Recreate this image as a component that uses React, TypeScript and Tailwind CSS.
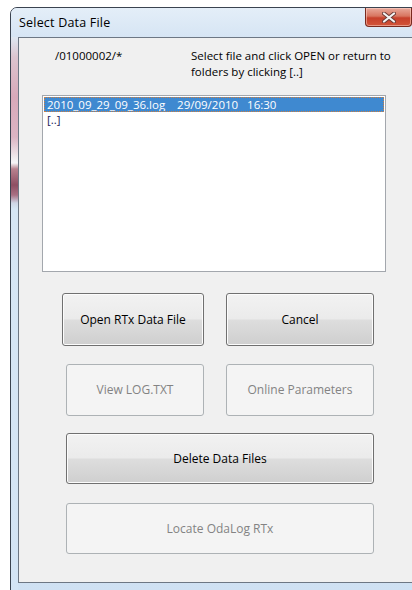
import React from "react";

const font = { fontFamily: '"Open Sans", "Liberation Sans", sans-serif' };

function EnabledButton({ label, className }: { label: string; className: string }) {
  return (
    <div
      className={`flex items-center justify-center rounded-[3px] border border-[#707070] bg-[linear-gradient(to_bottom,#f2f2f2_0%,#ebebeb_48%,#dddddd_52%,#cfcfcf_100%)] text-[12px] text-black shadow-[inset_0_0_0_1px_#fcfcfc] ${className}`}
    >
      {label}
    </div>
  );
}

function DisabledButton({ label, className }: { label: string; className: string }) {
  return (
    <div
      className={`flex items-center justify-center rounded-[3px] border border-[#adb2b5] bg-[#f4f4f4] text-[12px] text-[#838383] ${className}`}
    >
      {label}
    </div>
  );
}

export default function App() {
  return (
    <div className="h-[590px] w-[412px] overflow-hidden bg-white pl-[10px] pt-[7px]" style={font}>
      <div className="flex h-[600px] w-[412px] flex-col rounded-tl-[7px] border border-[#3a4350] bg-[linear-gradient(to_bottom,#dce9f6,#cfe1f3)]">
        {/* title bar */}
        <div className="flex h-[29px] shrink-0 items-start rounded-tl-[6px] bg-[linear-gradient(to_bottom,#e4eef8,#d6e5f4)]">
          <span className="ml-[8px] mt-[7px] text-[12.5px] leading-[16px] tracking-[0.2px] text-black">Select Data File</span>
          <div className="ml-auto mr-[9px] flex h-[19px] w-[47px] items-center justify-center rounded-b-[4px] border border-t-0 border-[#7a2a1e] bg-[linear-gradient(to_bottom,#e9a99b_0%,#d87560_45%,#c7402b_55%,#d2553a_100%)] shadow-[inset_0_0_0_1px_rgba(255,220,210,0.5)]">
            <svg width="14" height="11" viewBox="0 0 14 11">
              <path
                d="M2 1.5 L12 9.5 M12 1.5 L2 9.5"
                stroke="#6a3a35"
                strokeWidth="4"
                strokeLinecap="round"
              />
              <path
                d="M2 1.5 L12 9.5 M12 1.5 L2 9.5"
                stroke="#f4f4f4"
                strokeWidth="2.2"
                strokeLinecap="round"
              />
            </svg>
          </div>
        </div>

        {/* frame body with client area */}
        <div className="flex flex-1">
          <div className="w-[7px] shrink-0 bg-[linear-gradient(to_bottom,#dfe8f2_0px,#dcc4cf_20px,#d8a9ba_60px,#dcb4c3_100px,#f2eef1_122px,#f6f6f8_126px,#b8828f_132px,#8e4f63_148px,#a97084_158px,#cfd6e6_166px,#d6e6f5_172px,#d3e4f5_100%)]" />
          <div className="flex h-[546px] flex-1 flex-col border border-[#6d7784] bg-[#f0f0f0] pr-[40px]">
            {/* header labels */}
            <div className="mt-[10px] flex text-[11.5px] leading-[16px] text-black">
              <span className="ml-[36px] w-[136px]">/01000002/*</span>
              <span className="w-[210px]">
                Select file and click OPEN or return to
                <br />
                folders by clicking [..]
              </span>
            </div>

            {/* file list */}
            <div className="ml-[23px] mt-[15px] h-[177px] w-[344px] border border-[#a3a7ad] bg-white p-[1px] text-[11.5px]">
              <div className="h-[15px] overflow-hidden whitespace-pre border border-dotted border-[#d08040] bg-[#3f89d0] pl-[2px] leading-[13px] text-white">
                2010_09_29_09_36.log    29/09/2010   16:30
              </div>
              <div className="h-[15px] pl-[3px] leading-[15px] text-[#1c1c5a]">[..]</div>
            </div>

            {/* buttons */}
            <div className="mt-[21px] flex">
              <EnabledButton label="Open RTx Data File" className="ml-[43px] h-[53px] w-[142px]" />
              <EnabledButton label="Cancel" className="ml-[22px] h-[53px] w-[148px]" />
            </div>
            <div className="mt-[18px] flex">
              <DisabledButton label="View LOG.TXT" className="ml-[47px] h-[52px] w-[138px]" />
              <DisabledButton label="Online Parameters" className="ml-[22px] h-[52px] w-[148px]" />
            </div>
            <EnabledButton label="Delete Data Files" className="ml-[47px] mt-[17px] h-[51px] w-[308px]" />
            <DisabledButton label="Locate OdaLog RTx" className="ml-[47px] mt-[19px] h-[51px] w-[308px]" />
          </div>
        </div>
      </div>
    </div>
  );
}
